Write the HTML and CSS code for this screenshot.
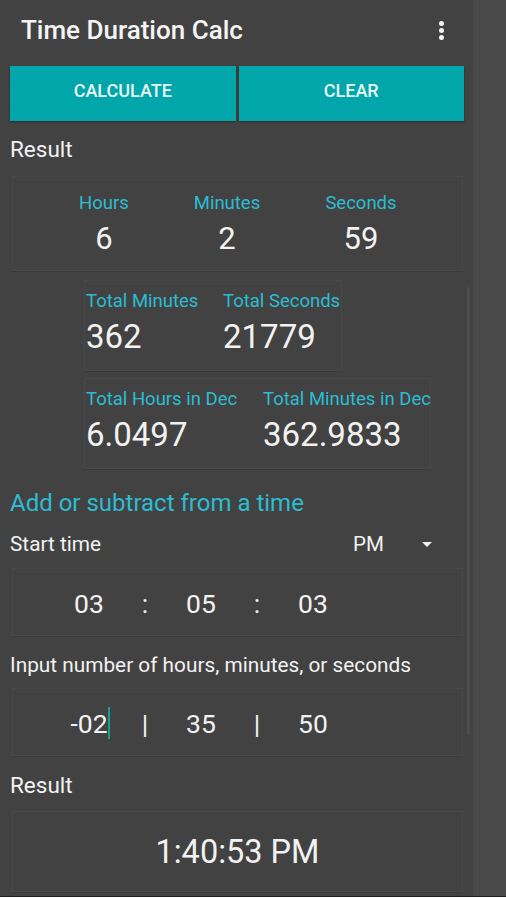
FILE: index.html
```html
<!DOCTYPE html>
<html>

<head>
    <meta http-equiv="Content-Type" content="text/html; charset=utf-8">
    <title>Time Duration Calc</title>
    <link rel="stylesheet" href="styles.css">
</head>

<body>
    <div class="screen">
        <div class="app">
            <div class="toolbar">
                <span class="title">Time Duration Calc</span>
                <span class="menu"><i></i><i></i><i></i></span>
            </div>

            <div class="actions">
                <button class="btn">CALCULATE</button>
                <button class="btn">CLEAR</button>
            </div>

            <div class="label result-label">Result</div>

            <div class="box hms">
                <div class="cell">
                    <div class="cap">Hours</div>
                    <div class="val">6</div>
                </div>
                <div class="cell">
                    <div class="cap">Minutes</div>
                    <div class="val">2</div>
                </div>
                <div class="cell">
                    <div class="cap">Seconds</div>
                    <div class="val">59</div>
                </div>
            </div>

            <div class="box totals totals-a">
                <div>
                    <div class="cap">Total Minutes</div>
                    <div class="big">362</div>
                </div>
                <div>
                    <div class="cap">Total Seconds</div>
                    <div class="big">21779</div>
                </div>
            </div>

            <div class="box totals totals-b">
                <div>
                    <div class="cap">Total Hours in Dec</div>
                    <div class="big">6.0497</div>
                </div>
                <div>
                    <div class="cap">Total Minutes in Dec</div>
                    <div class="big">362.9833</div>
                </div>
            </div>

            <div class="section">Add or subtract from a time</div>

            <div class="start-row">
                <span class="label">Start time</span>
                <span class="ampm">PM</span>
                <span class="caret"></span>
            </div>

            <div class="box time-row">
                <span>03</span>
                <span>:</span>
                <span>05</span>
                <span>:</span>
                <span>03</span>
            </div>

            <div class="label input-label">Input number of hours, minutes, or seconds</div>

            <div class="box time-row">
                <span class="editing">-02</span>
                <span>|</span>
                <span>35</span>
                <span>|</span>
                <span>50</span>
            </div>

            <div class="label result-label second">Result</div>

            <div class="box final">1:40:53 PM</div>

            <div class="scrollbar"></div>
        </div>
        <div class="side"></div>
    </div>
    <div class="bottom"></div>
</body>
</html>
```

FILE: styles.css
```css
body {
    margin: 0;
    font-family: Roboto, "Noto Sans", sans-serif;
    background: #ffffff;
    color: #f2f2f2;
}

.screen {
    display: flex;
    height: 896px;
    overflow: hidden;
}

.app {
    position: relative;
    width: 473px;
    background: #424242;
}

.side {
    flex: 1;
    background: #4a4a4a;
}

.bottom {
    height: 1px;
    background: #1c1c1c;
}

.toolbar {
    display: flex;
    align-items: center;
    justify-content: space-between;
    height: 60px;
    padding: 0 29px 0 21px;
}

.title {
    font-size: 26px;
    font-weight: 500;
    color: #f5f5f5;
}

.menu {
    display: flex;
    flex-direction: column;
    gap: 2px;
}

.menu i {
    width: 5px;
    height: 5px;
    border-radius: 50%;
    background: #f5f5f5;
}

.actions {
    display: flex;
    gap: 3px;
    margin: 6px 9px 0 10px;
}

.btn {
    flex: 1;
    height: 55px;
    padding: 0 0 6px;
    border: none;
    background: #00a6a9;
    color: #e8f6f6;
    font-family: Roboto, sans-serif;
    font-size: 18px;
    font-weight: 500;
    box-shadow: 0 1px 2px rgba(0, 0, 0, 0.35);
}

.label {
    font-size: 20.8px;
    color: #f2f2f2;
}

.result-label {
    margin: 14px 0 0 10px;
    font-size: 22.5px;
    line-height: 28px;
}

.result-label.second {
    margin-top: 15px;
}

.box {
    border: 1px solid #484848;
    box-shadow: 0 1px 0 #3b3b3b;
}

.cap {
    font-size: 18.5px;
    color: #2cbdd2;
    line-height: 22px;
    white-space: nowrap;
}

.hms {
    display: grid;
    grid-template-columns: 110px 136px 132px;
    margin: 13px 10px 0 12px;
    padding: 15px 0 16px 36px;
    height: 62px;
}

.cell {
    text-align: center;
}

.val {
    font-size: 31px;
    line-height: 38px;
    margin-top: 6px;
}

.totals {
    display: grid;
    margin-left: 84px;
    padding: 9px 0 0 1px;
    height: 80px;
}

.totals-a {
    width: 255px;
    margin-top: 9px;
    grid-template-columns: 137px auto;
}

.totals-b {
    width: 344px;
    margin-top: 7px;
    grid-template-columns: 177px auto;
}

.big {
    font-size: 33px;
    line-height: 40px;
    margin-top: 5px;
    white-space: nowrap;
}

.section {
    margin: 19px 0 0 10px;
    font-size: 24px;
    line-height: 30px;
    color: #2cbdd2;
}

.start-row {
    display: flex;
    align-items: center;
    margin: 12px 0 0 10px;
    height: 28px;
}

.ampm {
    margin-left: 252px;
    font-size: 20.5px;
}

.caret {
    margin-left: 38px;
    width: 0;
    height: 0;
    border-left: 5px solid transparent;
    border-right: 5px solid transparent;
    border-top: 5px solid #eeeeee;
}

.time-row {
    display: flex;
    align-items: center;
    margin: 10px 10px 0 12px;
    padding: 3px 0 0 48px;
    height: 63px;
    font-size: 26.5px;
}

.time-row span {
    width: 56px;
    text-align: center;
}

.editing {
    position: relative;
}

.editing::after {
    content: "";
    position: absolute;
    left: 47px;
    top: -1px;
    width: 2px;
    height: 32px;
    background: #13a08c;
}

.input-label {
    margin: 16px 0 0 10px;
    line-height: 26px;
}

.final {
    margin: 12px 10px 0 12px;
    height: 79px;
    display: flex;
    align-items: center;
    justify-content: center;
    font-size: 32.5px;
}

.scrollbar {
    position: absolute;
    left: 467px;
    top: 287px;
    width: 3px;
    height: 448px;
    background: #4d4d4d;
    border-radius: 2px;
}
```
